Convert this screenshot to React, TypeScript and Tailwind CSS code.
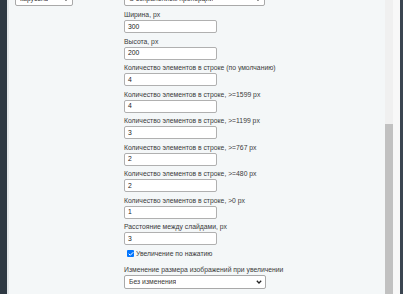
import { Check } from 'lucide-react'

const fields = [
  { label: 'Ширина, px', value: '300' },
  { label: 'Высота, px', value: '200' },
  { label: 'Количество элементов в строке (по умолчанию)', value: '4' },
  { label: 'Количество элементов в строке, >=1599 px', value: '4' },
  { label: 'Количество элементов в строке, >=1199 px', value: '3' },
  { label: 'Количество элементов в строке, >=767 px', value: '2' },
  { label: 'Количество элементов в строке, >=480 px', value: '2' },
  { label: 'Количество элементов в строке, >0 px', value: '1' },
  { label: 'Расстояние между слайдами, px', value: '3' },
]

function Chevron() {
  return (
    <svg width="6" height="4" viewBox="0 0 6 4" className="shrink-0">
      <path d="M0.8 0.8 L3 3 L5.2 0.8" fill="none" stroke="#222" strokeWidth="1.3" />
    </svg>
  )
}

function FakeSelect({ value, className }: { value: string; className: string }) {
  return (
    <div className={`flex h-[14px] items-center justify-between rounded-[2px] border border-[#a9a9a9] bg-white pl-[4px] pr-[3px] ${className}`}>
      <span className="truncate">{value}</span>
      <Chevron />
    </div>
  )
}

export default function App() {
  return (
    <div
      className="flex h-[294px] w-[403px] overflow-hidden bg-[#f4f7f8] text-[6.8px] leading-[10px] text-[#3a3a3a]"
      style={{ fontFamily: '"Liberation Sans", Arial, sans-serif' }}
    >
      <div className="w-[7px] shrink-0 bg-[#2e3943]" />
      <div className="w-[2px] shrink-0 bg-[#e3e7e9]" />

      <div className="flex min-w-0 flex-1">
        <div className="w-[115px] shrink-0 pl-[6px]">
          <FakeSelect value="карусель" className="-mt-[8px] w-[58px]" />
        </div>

        <div className="flex w-[160px] shrink-0 flex-col">
          <FakeSelect value="С сохранением пропорции" className="-mt-[8px] w-[141px]" />

          <div className="mt-[4px] flex flex-col gap-[3.5px]">
            {fields.map(f => (
              <div key={f.label} className="flex flex-col">
                <label className="whitespace-nowrap">{f.label}</label>
                <div className="flex h-[13px] w-[93px] items-center rounded-[2px] border border-[#b0b0b0] bg-white pl-[3px] text-[#222]">
                  {f.value}
                </div>
              </div>
            ))}

            <div className="flex h-[10px] items-center gap-[2px] pl-[3px]">
              <span className="flex h-[7px] w-[7px] items-center justify-center rounded-[1px] bg-[#0075ff]">
                <Check className="h-[6px] w-[6px] text-white" strokeWidth={4} />
              </span>
              <span className="whitespace-nowrap">Увеличение по нажатию</span>
            </div>

            <div className="mt-[3px] flex flex-col">
              <label className="whitespace-nowrap">Изменение размера изображений при увеличении</label>
              <FakeSelect value="Без изменения" className="w-[142px]" />
            </div>
          </div>
        </div>
      </div>

      <div className="flex w-[8px] shrink-0 flex-col">
        <div className="h-[124px] bg-[#f0f0f0]" />
        <div className="flex-1 bg-[#c1c1c1]" />
      </div>
      <div className="w-[7px] shrink-0 bg-[#f8f8f8]" />
      <div className="w-[3px] shrink-0 bg-[#3b4550]" />
    </div>
  )
}
